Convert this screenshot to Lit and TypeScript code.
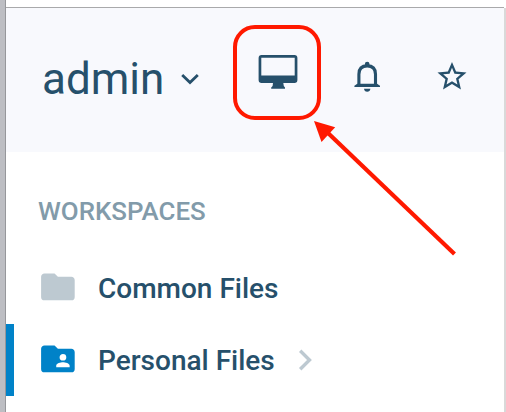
import { LitElement, html, css, svg, nothing } from "lit";
import { customElement, property } from "lit/decorators.js";

const FOLDER =
  "M10,4H4C2.89,4 2,4.89 2,6V18A2,2 0 0,0 4,20H20A2,2 0 0,0 22,18V8C22,6.89 21.1,6 20,6H12L10,4Z";
const FOLDER_ACCOUNT =
  "M19,17H11V16C11,14.67 13.67,14 15,14C16.33,14 19,14.67 19,16M15,9A2,2 0 0,1 17,11A2,2 0 0,1 15,13A2,2 0 0,1 13,11C13,9.89 13.9,9 15,9M20,6H12L10,4H4C2.89,4 2,4.89 2,6V18A2,2 0 0,0 4,20H20A2,2 0 0,0 22,18V8C22,6.89 21.1,6 20,6Z";
const STAR =
  "M12,15.39L8.24,17.66L9.23,13.38L5.91,10.5L10.29,10.13L12,6.09L13.71,10.13L18.09,10.5L14.77,13.38L15.76,17.66M22,9.24L14.81,8.63L12,2L9.19,8.63L2,9.24L7.45,13.97L5.82,21L12,17.27L18.18,21L16.54,13.97L22,9.24Z";

@customElement("workspace-row")
export class WorkspaceRow extends LitElement {
  @property() label = "";
  @property({ type: Boolean, reflect: true }) selected = false;

  static styles = css`
    :host {
      display: flex;
      align-items: center;
      box-sizing: border-box;
      height: 72px;
      padding-left: 23px;
      border-left: 8px solid transparent;
      color: #26506b;
    }
    :host([selected]) {
      border-left-color: #0082c8;
    }
    .folder {
      width: 42px;
      height: 42px;
      margin-top: -2px;
      flex: none;
      fill: #bdc9d1;
    }
    :host([selected]) .folder {
      fill: #0082c8;
    }
    .label {
      margin: 1px 0 0 19px;
      font-size: 28px;
      line-height: 36px;
      font-weight: 500;
      white-space: nowrap;
    }
    .next {
      width: 16px;
      height: 24px;
      margin-left: 23.6px;
      fill: none;
      stroke: #bdc9d1;
      stroke-width: 3.4;
    }
  `;

  render() {
    return html`
      <svg class="folder" viewBox="-0.44 -0.46 25 25">
        ${svg`<path fill-rule="evenodd" d=${this.selected ? FOLDER_ACCOUNT : FOLDER}></path>`}
      </svg>
      <span class="label">${this.label}</span>
      ${this.selected
        ? html`<svg class="next" viewBox="0 0 16 24"><path d="M2.2 2.7L11.5 12L2.2 21.3"></path></svg>`
        : nothing}
    `;
  }
}

@customElement("app-root")
export class AppRoot extends LitElement {
  static styles = css`
    :host {
      display: flex;
      position: relative;
      box-sizing: border-box;
      width: 506px;
      height: 412px;
      overflow: hidden;
      background: #fff;
      font-family: Roboto, "Liberation Sans", sans-serif;
      color: #26506b;
    }
    .edge {
      box-sizing: border-box;
      width: 6px;
      flex: none;
      background: #bdbec3;
      border-right: 1px solid #96979b;
    }
    .panel {
      flex: 1;
      min-width: 0;
      padding-top: 7px;
    }
    .header {
      display: flex;
      box-sizing: border-box;
      height: 145px;
      border-top: 1px solid #a9a9ab;
      background: #f8f9fd;
    }
    .user {
      width: 227px;
      display: flex;
      flex: none;
    }
    .name {
      width: 121px;
      margin: 45px 0 0 36px;
      font-size: 44px;
      line-height: 52px;
    }
    .caret {
      width: 20px;
      height: 14px;
      margin: 64px 0 0 17px;
      fill: none;
      stroke: #26506b;
      stroke-width: 2.8;
    }
    .monitor-button {
      box-sizing: border-box;
      width: 88px;
      height: 95px;
      flex: none;
      margin-top: 17px;
      border: 4px solid #ff1900;
      border-radius: 22px;
      padding: 26px 0 0 21px;
    }
    .monitor {
      display: block;
      width: 40px;
      height: 34px;
      fill: #26506b;
    }
    .bell {
      width: 26px;
      height: 31px;
      margin: 53px 0 0 33px;
      flex: none;
    }
    .star {
      width: 36px;
      height: 36px;
      margin: 51px 0 0 54px;
      flex: none;
      fill: #26506b;
    }
    .title {
      height: 100px;
      box-sizing: border-box;
      padding: 43px 0 0 32px;
      font-size: 25.9px;
      line-height: 32px;
      font-weight: 500;
      color: #829baa;
    }
    .scroll {
      width: 2px;
      flex: none;
      margin-top: 8px;
      background: #d9d9d9;
    }
    .arrow {
      position: absolute;
      left: 310px;
      top: 118px;
      width: 150px;
      height: 142px;
    }
  `;

  render() {
    return html`
      <div class="edge"></div>
      <main class="panel">
        <header class="header">
          <div class="user">
            <span class="name">admin</span>
            <svg class="caret" viewBox="0 0 20 14"><path d="M2.2 3L10 10.6L17.8 3"></path></svg>
          </div>
          <div class="monitor-button">
            <svg class="monitor" viewBox="0 0 40 34">
              <path
                fill-rule="evenodd"
                d="M3.6 0H36.4Q39.4 0 39.4 3V25Q39.4 28 36.4 28H25.3L25.8 31L27 32.5V33.8H13.2V32.5L14.6 31L15 28H3.6Q.6 28 .6 25V3Q.6 0 3.6 0ZM3.3 2.7V20.6H36.7V2.7Z"
              ></path>
            </svg>
          </div>
          <svg class="bell" viewBox="0 0 26 31">
            <path
              d="M4.9 25V13.2C4.9 7.7 8.2 4.9 13.2 4.9S21.5 7.7 21.5 13.2V25"
              fill="none"
              stroke="#26506b"
              stroke-width="3.1"
            ></path>
            <path
              d="M10.9 5V3A2.3 2.3 0 0 1 15.5 3V5ZM.4 26V24.7L3.3 22.8H23.1L26 24.7V26ZM10 27.8H16.4C16.2 29.9 15 30.8 13.2 30.8S10.2 29.9 10 27.8Z"
              fill="#26506b"
            ></path>
          </svg>
          <svg class="star" viewBox="-0.41 0 24.83 24.83"><path d=${STAR}></path></svg>
        </header>
        <div class="title">WORKSPACES</div>
        <workspace-row label="Common Files"></workspace-row>
        <workspace-row label="Personal Files" selected></workspace-row>
      </main>
      <div class="scroll"></div>
      <svg class="arrow" viewBox="310 118 150 142">
        <path d="M328 133L454.5 254" stroke="#ff1900" stroke-width="4.2"></path>
        <path d="M314 121L335.2 127.2L321.5 142Z" fill="#ff1900"></path>
      </svg>
    `;
  }
}
